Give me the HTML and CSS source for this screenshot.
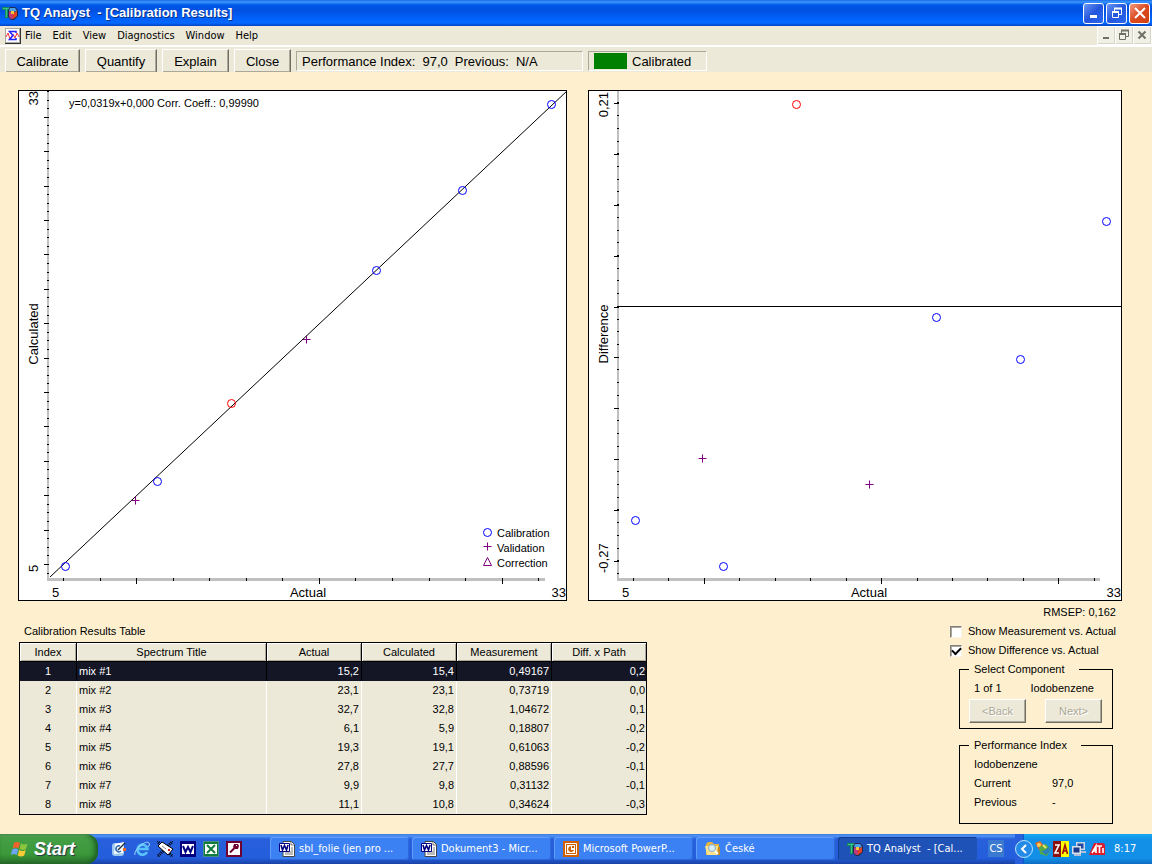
FILE: index.html
```html
<!DOCTYPE html>
<html lang="en">
<head>
<meta charset="utf-8">
<title>TQ Analyst - [Calibration Results]</title>
<link rel="stylesheet" href="styles.css">
</head>
<body>
<svg class="defs" aria-hidden="true">
  <defs>
    <symbol id="tq" viewBox="0 0 16 16">
      <path d="M0 2h9v3H6v8H3V5H0z" fill="#138a5e"/><path d="M1 3h7v1H5v8H4V4H1z" fill="#3cc48c"/>
      <path d="M8 2h5l3 3v6l-4 4H9l-3-3V5z" fill="#202a50"/>
      <path d="M8 3h5l2 3-4 1-4-1z" fill="#4ba0e8"/><path d="M7 6l4 2v6H9l-2-2z" fill="#c03a78"/><path d="M15 6l-4 2v6l4-3z" fill="#e44220"/><path d="M9 6h3v3H9z" fill="#f4c83c"/>
    </symbol>
    <symbol id="word" viewBox="0 0 16 16">
      <path d="M4 .5h8.500l3 3v12H4z" fill="#fff" stroke="#444"/><path d="M12 1v3h3M12 7h2M12 9h2M6 13h8M6 11h8" stroke="#777" fill="none"/>
      <path d="M.5 2.500h10v8H.5z" fill="#fff" stroke="#000080"/><path d="M2 4l1.500 5L5.500 4.500 7.500 9 9 4" fill="none" stroke="#000080" stroke-width="1.600"/>
    </symbol>
    <symbol id="restore" viewBox="0 0 12 12"><path d="M3.500 4V1.500h7v6H8" fill="none" stroke="currentColor"/><path d="M3 1.500h8M1 5h7" stroke="currentColor" stroke-width="2"/><path d="M1.500 4.500h6v6h-6z" fill="none" stroke="currentColor"/></symbol>
    <g id="dot"><circle r="4"/></g>
    <path id="plus" d="M-4 0H4M0-4V4"/>
  </defs>
</svg>
<div class="window">
  <header class="titlebar">
    <svg class="icon"><use href="#tq"/></svg>
    <h1>TQ Analyst&nbsp; - [Calibration Results]</h1>
    <div class="caption-buttons">
      <button aria-label="Minimize"><svg viewBox="0 0 12 12"><path d="M2 9.500h7" stroke="#fff" stroke-width="3"/></svg></button>
      <button aria-label="Restore"><svg><use href="#restore"/></svg></button>
      <button class="close" aria-label="Close"><svg viewBox="0 0 12 12"><path d="M1 1l10 10M11 1L1 11" stroke="#fff" stroke-width="2"/></svg></button>
    </div>
  </header>
  <nav class="menubar">
    <svg class="docicon" viewBox="0 0 16 16"><path d="M0 0h16v16H0z" fill="#333"/><path d="M0 0h15v15H0z" fill="#aaa"/><path d="M1 1h13v13H1z" fill="#fff"/><path d="M1 9l2-4 2 6 3-5 2 4 2-5 2 4" fill="none" stroke="#e33"/><path d="M11 5V3.500H4.500L8 7.500l-3.500 4H11V10" fill="none" stroke="#22f" stroke-width="1.500"/></svg>
    <button>File</button><button>Edit</button><button>View</button><button>Diagnostics</button><button>Window</button><button>Help</button>
    <div class="doc-buttons">
      <button aria-label="Minimize document"><svg viewBox="0 0 12 12"><path d="M3 9h6" stroke="currentColor" stroke-width="2"/></svg></button>
      <button aria-label="Restore document"><svg><use href="#restore"/></svg></button>
      <button aria-label="Close document"><svg viewBox="0 0 12 12"><path d="M2.500 2.500l7 7M9.500 2.500l-7 7" stroke="currentColor" stroke-width="2"/></svg></button>
    </div>
  </nav>
  <div class="toolbar">
    <button class="wide">Calibrate</button><button class="mid">Quantify</button><button>Explain</button><button class="small">Close</button>
    <div class="readout perf"><span>Performance Index:</span><span>97,0</span><span>Previous:</span><span>N/A</span></div>
    <div class="readout status"><i></i>Calibrated</div>
  </div>
  <main>
    <div class="charts">
      <svg class="chart" viewBox="18 90 549 511" role="img" aria-label="Calculated vs. Actual">
        <path class="frame" d="M18.500 90.500h548v510h-548z"/>
        <rect class="axis" x="47" y="91" width="2" height="490"/><rect class="axis" x="47" y="578" width="498" height="3"/>
        <line class="ticks" x1="48" y1="573.500" x2="48" y2="91" stroke-width="2" stroke-dasharray="1 7.600"/>
        <line class="ticks" x1="46.500" y1="565" x2="46.500" y2="117" stroke-width="5" stroke-dasharray="1 33.400"/>
        <line class="ticks" x1="63" y1="579.500" x2="545" y2="579.500" stroke-width="3" stroke-dasharray="1 35.560"/>
        <line class="ticks" x1="136" y1="581" x2="545" y2="581" stroke-width="5" stroke-dasharray="1 181.900"/>
        <path class="fit" d="M50 577L567 91"/>
        <g class="cal"><use href="#dot" x="65.500" y="566.500"/><use href="#dot" x="157.500" y="481.500"/><use href="#dot" x="376.500" y="270.500"/><use href="#dot" x="462.500" y="190.500"/><use href="#dot" x="551.500" y="104.500"/><use href="#dot" x="487.500" y="532.500"/></g>
        <g class="out"><use href="#dot" x="231.500" y="403.500"/></g>
        <g class="val"><use href="#plus" x="135.500" y="500.500"/><use href="#plus" x="306.500" y="339.500"/><use href="#plus" x="487.500" y="546.500"/><path d="M487.500 557.500l4 8h-8z"/></g>
        <text class="small-text" x="69" y="107">y=0,0319x+0,000 Corr. Coeff.: 0,99990</text>
        <text class="small-text" x="497" y="537">Calibration</text><text class="small-text" x="497" y="552">Validation</text><text class="small-text" x="497" y="567">Correction</text>
        <text x="52" y="597">5</text><text x="308" y="597" text-anchor="middle">Actual</text><text x="566" y="597" text-anchor="end">33</text>
        <text transform="translate(38 572)rotate(-90)">5</text><text transform="translate(38 334)rotate(-90)" text-anchor="middle">Calculated</text><text transform="translate(38 91)rotate(-90)" text-anchor="end">33</text>
      </svg>
      <svg class="chart" viewBox="588 90 534 511" role="img" aria-label="Difference vs. Actual">
        <path class="frame" d="M588.500 90.500h533v510h-533z"/>
        <rect class="axis" x="617" y="91" width="2" height="490"/><rect class="axis" x="617" y="578" width="483" height="3"/>
        <line class="ticks" x1="618" y1="574" x2="618" y2="91" stroke-width="2" stroke-dasharray="1 11.720"/>
        <line class="ticks" x1="616.500" y1="562" x2="616.500" y2="91" stroke-width="5" stroke-dasharray="1 49.880"/>
        <line class="ticks" x1="633" y1="579.500" x2="1100" y2="579.500" stroke-width="3" stroke-dasharray="1 34.440"/>
        <line class="ticks" x1="704" y1="581" x2="1100" y2="581" stroke-width="5" stroke-dasharray="1 176.200"/>
        <path class="fit" d="M619 306.500H1122"/>
        <g class="cal"><use href="#dot" x="635.500" y="520.500"/><use href="#dot" x="723.500" y="566.500"/><use href="#dot" x="936.500" y="317.500"/><use href="#dot" x="1020.500" y="359.500"/><use href="#dot" x="1106.500" y="221.500"/></g>
        <g class="out"><use href="#dot" x="796.500" y="104.500"/></g>
        <g class="val"><use href="#plus" x="702.500" y="458.500"/><use href="#plus" x="869.500" y="484.500"/></g>
        <text x="622" y="597">5</text><text x="869" y="597" text-anchor="middle">Actual</text><text x="1121" y="597" text-anchor="end">33</text>
        <text transform="translate(608 573)rotate(-90)">-0,27</text><text transform="translate(608 334)rotate(-90)" text-anchor="middle">Difference</text><text transform="translate(608 92)rotate(-90)" text-anchor="end">0,21</text>
      </svg>
    </div>
    <div class="details">
      <table>
        <caption>Calibration Results Table</caption>
        <colgroup><col class="c-index"><col class="c-title"><col span="3" class="c-num"><col></colgroup>
        <thead><tr><th>Index</th><th>Spectrum Title</th><th>Actual</th><th>Calculated</th><th>Measurement</th><th>Diff. x Path</th></tr></thead>
        <tbody>
          <tr class="selected"><td>1</td><td>mix #1</td><td>15,2</td><td>15,4</td><td>0,49167</td><td>0,2</td></tr>
          <tr><td>2</td><td>mix #2</td><td>23,1</td><td>23,1</td><td>0,73719</td><td>0,0</td></tr>
          <tr><td>3</td><td>mix #3</td><td>32,7</td><td>32,8</td><td>1,04672</td><td>0,1</td></tr>
          <tr><td>4</td><td>mix #4</td><td>6,1</td><td>5,9</td><td>0,18807</td><td>-0,2</td></tr>
          <tr><td>5</td><td>mix #5</td><td>19,3</td><td>19,1</td><td>0,61063</td><td>-0,2</td></tr>
          <tr><td>6</td><td>mix #6</td><td>27,8</td><td>27,7</td><td>0,88596</td><td>-0,1</td></tr>
          <tr><td>7</td><td>mix #7</td><td>9,9</td><td>9,8</td><td>0,31132</td><td>-0,1</td></tr>
          <tr><td>8</td><td>mix #8</td><td>11,1</td><td>10,8</td><td>0,34624</td><td>-0,3</td></tr>
        </tbody>
      </table>
      <aside>
        <p class="rmsep">RMSEP: 0,162</p>
        <label><input type="checkbox">Show Measurement vs. Actual</label>
        <label><input type="checkbox" checked>Show Difference vs. Actual</label>
        <fieldset class="component">
          <legend>Select Component</legend>
          <div class="pair"><span>1 of 1</span><span>Iodobenzene</span></div>
          <div class="steps"><button disabled>&lt;Back</button><button disabled>Next&gt;</button></div>
        </fieldset>
        <fieldset class="index">
          <legend>Performance Index</legend>
          <p>Iodobenzene</p>
          <dl><dt>Current</dt><dd>97,0</dd><dt>Previous</dt><dd>-</dd></dl>
        </fieldset>
      </aside>
    </div>
  </main>
  <footer class="taskbar">
    <button class="start"><svg viewBox="0 0 18 18"><path d="M3 3q3-2 6 0L7.500 8.500q-3-2-6 0z" fill="#f0612c"/><path d="M10 3.500q3 2 6.500 0L15 9q-3 2-6.500 0z" fill="#8cc63e"/><path d="M1.200 9.500q3-2 6 0L5.700 15q-3-2-6 0z" fill="#6ea4f4"/><path d="M8.200 10q3 2 6.500 0l-1.500 5.500q-3 2-6.500 0z" fill="#fbcb35"/></svg>Start</button>
    <div class="quick">
      <button aria-label="Show desktop"><svg viewBox="0 0 16 16"><rect x="1" y="2" width="12" height="13" rx="3" fill="#9cc8f0"/><path d="M4 3l9-2-1 11-9 1z" fill="#fff"/><path d="M9 5a3 3 0 1 0 1 5" fill="none" stroke="#2769b8" stroke-width="1.500"/><path d="M7 9l7-7" stroke="#234" stroke-width="1.500"/><path d="M12 7h3v3h-3z" fill="#e86424"/></svg></button>
      <button aria-label="Internet Explorer"><svg viewBox="0 0 16 16"><path d="M13 11a5 5 0 1 1 .5-3H4.500" fill="none" stroke="#59c2fa" stroke-width="2.600"/><path d="M1 14C-1 10 12-2 15 2c1 1 0 3-1 4" fill="none" stroke="#a5dfff"/></svg></button>
      <button aria-label="Mail"><svg viewBox="0 0 16 16"><path d="M0 0l16 16M16 0L0 16" stroke="#000" stroke-dasharray="1 1" stroke-width="3"/><path d="M1 5l4-4 11 7-5 6z" fill="#fff" stroke="#000"/><path d="M5 5l4 3" stroke="#888"/><path d="M11 8h2v2h-2z" fill="#c22"/></svg></button>
      <button aria-label="Word"><svg viewBox="0 0 16 16"><path d="M0 0h16v16H0z" fill="#000080"/><path d="M2 3h12v10H2z" fill="#fff"/><path d="M3 5l2.500 6L8 6l2.500 5L13 5" fill="none" stroke="#000080" stroke-width="2"/></svg></button>
      <button aria-label="Excel"><svg viewBox="0 0 16 16"><path d="M.5.5h15v15H.5z" fill="#107b3a" stroke="#6fae78" stroke-dasharray="1 1"/><path d="M2 3h12v10H2z" fill="#fff"/><path d="M4 4l8 8M12 4l-8 8" stroke="#107b3a" stroke-width="2"/></svg></button>
      <button aria-label="Access"><svg viewBox="0 0 16 16"><path d="M0 0h16v16H0z" fill="#700030"/><path d="M2 2h12v12H2z" fill="#fff"/><path d="M8 3h4l1 2-1 3H9L7 6z" fill="#700030"/><path d="M10 4h1v1h-1z" fill="#fff"/><path d="M8.500 7L4 11.500" stroke="#700030" stroke-width="2"/></svg></button>
    </div>
    <div class="tasks">
      <button><svg class="icon"><use href="#word"/></svg>sbl_folie (jen pro ...</button>
      <button><svg class="icon"><use href="#word"/></svg>Dokument3 - Micr...</button>
      <button><svg class="icon" viewBox="0 0 16 16"><path d="M0 0h16v16H0z" fill="#d06000"/><path d="M2.500 2.500h11v11h-11z" fill="#d06000" stroke="#fff"/><path d="M4 4h8v8H4z" fill="#fff"/><path d="M8 5a3 3 0 1 0 3 4H8z" fill="#d06000"/><path d="M9 5h2v2H9z" fill="#d06000"/></svg>Microsoft PowerP...</button>
      <button><svg class="icon" viewBox="0 0 16 16"><path d="M1 3l2-2h4l2 2h5v11H1z" fill="#e8b63c"/><path d="M0 5h13l2 9H2z" fill="#fbe28c"/><path d="M13 6h2v8h-3z" fill="#c88a1e"/><circle cx="7" cy="7" r="3.500" fill="#d5efff" stroke="#88a9c4"/><path d="M10 10l3 3" stroke="#fff" stroke-width="2"/></svg>České</button>
      <button class="active"><svg class="icon"><use href="#tq"/></svg>TQ Analyst&nbsp; - [Cal...</button>
    </div>
    <span class="lang">CS</span>
    <div class="tray">
      <button class="expand" aria-label="Show hidden icons"><svg viewBox="0 0 18 18"><circle cx="9" cy="9" r="8.500" fill="#238ae8" stroke="#b8e2ff"/><path d="M11 5L7 9l4 4" fill="none" stroke="#fff" stroke-width="2"/></svg></button>
      <svg class="icon" viewBox="0 0 16 16"><path d="M0 2l5-2 4 5-5 4z" fill="#e2682c"/><circle cx="4" cy="4" r="2" fill="#ffd154"/><path d="M4 6l7-3 5 5-4 7-7-2z" fill="#55a943"/><path d="M6 10q5 0 8-5l1 5-4 4z" fill="#277fbe"/><path d="M8 4l3 3" stroke="#efe467" stroke-width="2"/></svg>
      <svg class="icon" viewBox="0 0 16 16"><path d="M0 0h8v16H0z" fill="#8c1010"/><path d="M8 0h8v16H8z" fill="#ff0"/><path d="M2 4h4l-4 8h4" fill="none" stroke="#fff" stroke-width="1.600"/><path d="M9.500 13L12 4l2.500 9M10.500 10h3" fill="none" stroke="#a01010" stroke-width="1.600"/></svg>
      <svg class="icon" viewBox="0 0 16 16"><path d="M5 1h9v8H5z" fill="#cbd5e5"/><path d="M6.500 2.500h6v5h-6z" fill="#25489e"/><path d="M1 5h9v8H1z" fill="#d8dfe9"/><path d="M2.500 6.500h6v5h-6z" fill="#1c3a8c"/><path d="M3 14h7M10 11h5" stroke="#b3bfd2" stroke-width="2"/></svg>
      <svg class="icon" viewBox="0 0 16 16"><path d="M5 2h8q3 0 3 3v9H0z" fill="#dd1c2c"/><path d="M3 12l4-7v7M4 10h3M8 5h5M10.500 5v7M14 7v5" fill="none" stroke="#fff" stroke-width="1.600"/></svg>
      <time>8:17</time>
    </div>
  </footer>
</div>
</body>
</html>
```
FILE: styles.css
```css
* { box-sizing: border-box; }
body { margin: 0; background: #fef0cf; color: #000; font: 11px/19px "Liberation Sans", Arial, sans-serif; }
button { font: inherit; color: inherit; padding: 0; border: 0; background: none; white-space: nowrap; }
p, dl, dd, h1 { margin: 0; }
svg { display: block; flex: none; }
.defs { position: absolute; width: 0; height: 0; }
.icon { width: 16px; height: 16px; }
.window { min-height: 100vh; display: flex; flex-direction: column; }

.titlebar { height: 26px; display: flex; align-items: center; gap: 4px; padding: 0 2px; color: #fff; background: linear-gradient(#1c6ce4 0, #3c96ff 2px, #0058e6 5px, #0050e0 10px, #0060fa 18px, #0268ff 23px, #0042c0 26px); }
.titlebar h1 { flex: 1; font: bold 13px/26px "Liberation Sans", Arial, sans-serif; text-shadow: 1px 1px #0a2f86; }
.caption-buttons { display: flex; gap: 2px; }
.caption-buttons button { width: 21px; height: 21px; display: grid; place-items: center; border: 1px solid #fff; border-radius: 3px; background: linear-gradient(135deg, #6a96f4, #2456dc 50%, #2a68f0); }
.caption-buttons .close { background: linear-gradient(135deg, #ef9a80, #dc4a20 50%, #d04010); }
.caption-buttons svg, .doc-buttons svg { width: 12px; height: 12px; }

.menubar { min-height: 21px; display: flex; align-items: center; padding-left: 5px; background: #ece9d8; border-bottom: 2px solid #fff; font: 11px/19px "DejaVu Sans Condensed", "Noto Sans", sans-serif; }
.menubar > button { margin-right: 11px; }
.docicon { width: 16px; height: 16px; margin-right: 4px; }
.doc-buttons { margin-left: auto; display: flex; gap: 1px; color: #707064; background: #fff; padding: 1px; }
.doc-buttons button { width: 17px; height: 17px; display: grid; place-items: center; background: #f1f0e6; border: solid #d8d5c6; border-width: 0 1px 1px 0; }

.toolbar { height: 25px; display: flex; gap: 5px; padding: 2px 5px 0; background: #ece9d8; font-size: 13px; overflow: hidden; }
.toolbar button { width: 67px; height: 24px; border: 1px solid; border-color: #fff #716f64 #716f64 #fff; box-shadow: inset -1px -1px #aca899; }
.toolbar .wide { width: 75px; }
.toolbar .mid { width: 72px; }
.toolbar .small { width: 57px; }
.readout { height: 20px; margin-top: 2px; display: flex; align-items: center; gap: 7px; padding: 0 5px; border: 1px solid; border-color: #aca899 #fff #fff #aca899; white-space: nowrap; }
.perf { width: 287px; }
.status { width: 119px; gap: 5px; }
.status i { width: 33px; height: 16px; background: #008000; }

main { flex: 1; padding: 18px 30px 6px 18px; }
.charts { display: grid; grid-template-columns: 549fr 534fr; gap: 21px; align-items: start; }
.chart { width: 100%; height: auto; font-size: 13px; }
.chart .small-text { font-size: 11px; }
.frame { fill: #fff; stroke: #000; }
.axis { fill: #c0c0c0; }
.ticks { stroke: #000; fill: none; }
.fit { stroke: #000; }
.frame, .axis, .ticks { shape-rendering: crispEdges; }
.cal { fill: none; stroke: #0000ff; }
.out { fill: none; stroke: #ff0000; }
.val { fill: none; stroke: #800080; }

.details { display: flex; justify-content: space-between; align-items: flex-start; gap: 20px; padding: 1px 6px 0 1px; }
table { table-layout: fixed; width: 628px; margin-top: 20px; border: 1px solid #000; border-spacing: 0; background: #ece9d8; }
caption { text-align: left; padding: 0 0 1px 5px; line-height: 19px; }
.c-index { width: 57px; }
.c-title { width: 190px; }
.c-num { width: 95px; }
th, td { height: 19px; padding: 0 2px; line-height: 18px; font-weight: normal; text-align: right; vertical-align: top; border-right: 1px solid #fff; }
th { padding: 0; text-align: center; border-right-color: #000; border-bottom: 1px solid #000; box-shadow: inset 1px 1px #fff, inset -1px -1px #aca899; }
td:first-child { text-align: center; }
td:nth-child(2) { text-align: left; }
th:last-child, td:last-child { border-right: 0; }
td:last-child { padding-right: 1px; }
.selected td { color: #fff; background: #141626; border-right-color: #000; }

aside { width: 166px; }
.rmsep { text-align: right; line-height: 20px; }
label { display: flex; align-items: center; gap: 6px; white-space: nowrap; }
input { appearance: none; width: 12px; height: 12px; margin: 0; background: #fff; border: 1px solid; border-color: #808080 #f8f4e8 #f8f4e8 #808080; box-shadow: inset 1px 1px #aca899; }
input:checked { display: grid; place-items: center; }
input:checked::before { content: ""; width: 7px; height: 4px; margin-bottom: 2px; border: solid #000; border-width: 0 0 2px 2px; rotate: -45deg; }
fieldset { min-width: 0; margin: 0 3px 7px 9px; border: 1px solid #000; padding: 0 10px 5px 9px; }
legend { padding: 0 14px 0 5px; }
.pair { display: flex; justify-content: space-between; padding: 0 8px 0 5px; }
.steps { display: flex; justify-content: space-between; padding-top: 1px; }
.steps button { width: 57px; height: 24px; color: #aca899; text-shadow: 1px 1px #fff; background: #ece9d8; border: 1px solid; border-color: #fff #716f64 #716f64 #fff; box-shadow: inset -1px -1px #aca899; }
.index { padding: 0 14px 11px; margin-bottom: 0; }
.index legend { margin-left: -5px; }
dl { display: grid; grid-template-columns: 78px 1fr; }

.taskbar { height: 30px; display: flex; color: #fff; background: linear-gradient(#3c78d8 0, #5094f8 2px, #2860dc 5px, #245edc 24px, #1941a5 30px); font: 11px/28px "DejaVu Sans Condensed", "Noto Sans", sans-serif; }
.start { width: 98px; display: flex; align-items: center; gap: 5px; padding-left: 11px; border-radius: 0 12px 12px 0; font: italic bold 18px/28px "Liberation Sans", sans-serif; text-shadow: 1px 1px 1px #234; background: linear-gradient(#6fb66f 0, #46a046 4px, #3a983a 20px, #2a6e2c); box-shadow: inset -3px 0 5px #1c5c20; }
.start svg { width: 18px; height: 18px; }
.quick { display: flex; align-items: center; gap: 7px; padding: 0 28px 0 13px; }
.quick svg { width: 16px; height: 16px; }
.tasks { flex: 1; display: flex; gap: 3px; padding: 3px 0 4px; min-width: 0; }
.tasks button { flex: 1; max-width: 139px; min-width: 0; overflow: hidden; display: flex; align-items: center; gap: 4px; padding-left: 9px; border-radius: 3px; background: #3c81f3; box-shadow: inset 1px 1px #639df8, inset -1px -1px #2c68d8; }
.tasks .active { background: #1e52b7; box-shadow: inset 1px 1px #143c8c; }
.lang { width: 16px; margin: 6px 11px 7px; line-height: 17px; text-align: center; background: #3979d0; }
.tray { width: 137px; display: flex; align-items: center; gap: 2px; background: linear-gradient(90deg, #2860dc 8px, #0a5bc6 8px, #0a5bc6 9px, transparent 9px), linear-gradient(#16a8f4, #1290e8 6px, #1290e8 24px, #0d6cc4); }
.expand svg { width: 18px; height: 18px; }
.tray time { margin-left: 7px; }
```
